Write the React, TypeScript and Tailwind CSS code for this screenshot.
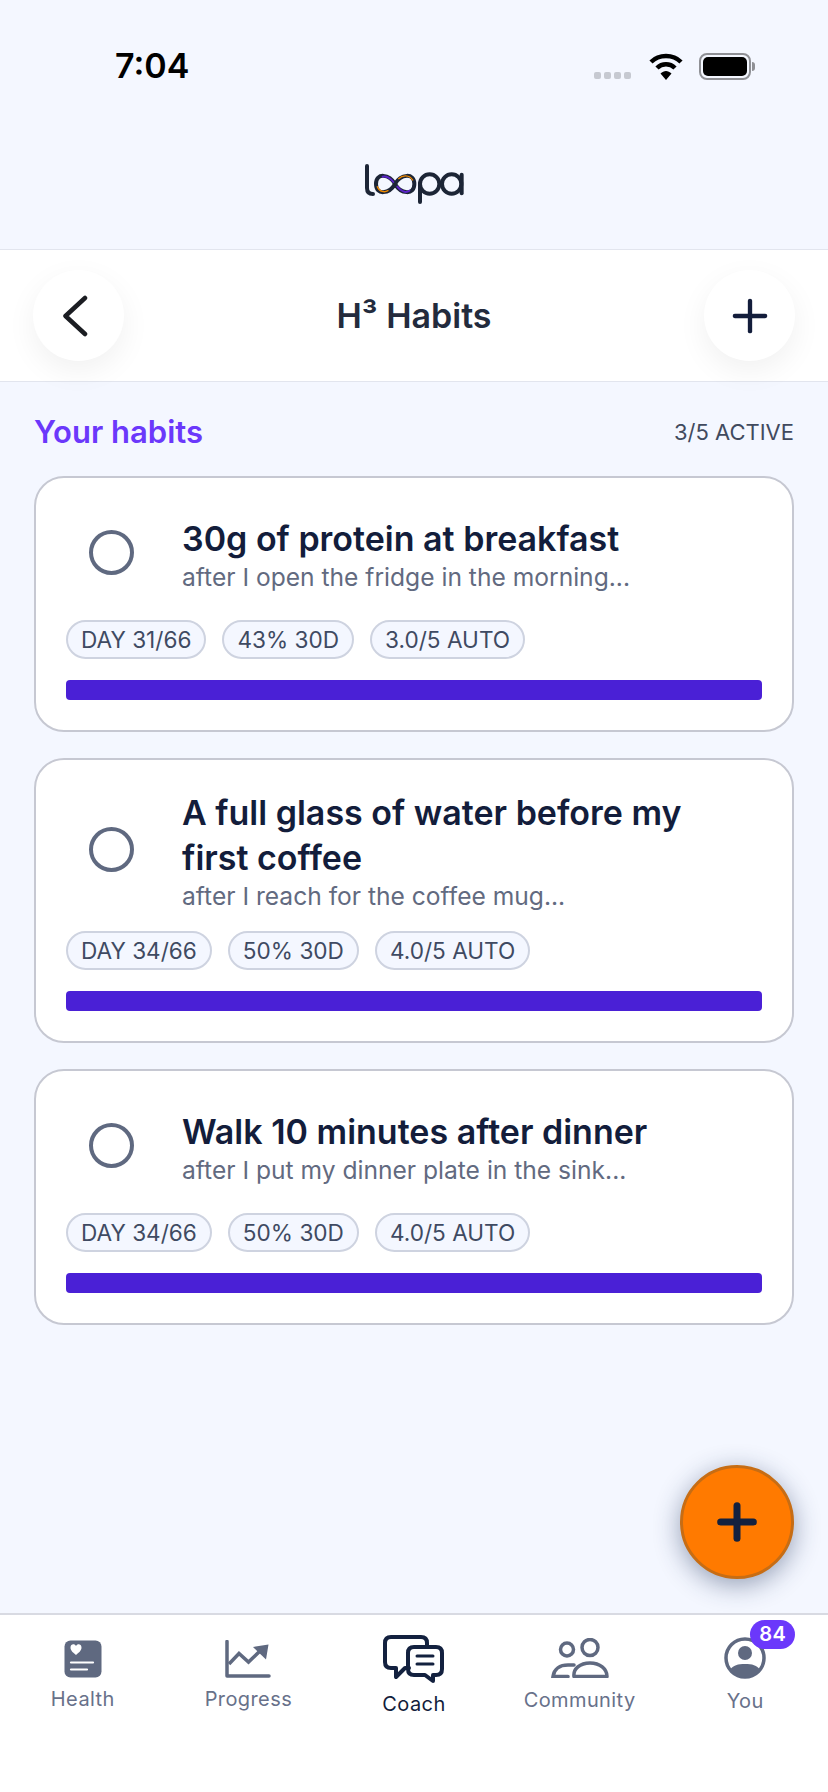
import { Plus } from "lucide-react";

const habits = [
  {
    title: "30g of protein at breakfast",
    cue: "after I open the fridge in the morning...",
    pills: ["DAY 31/66", "43% 30D", "3.0/5 AUTO"],
  },
  {
    title: "A full glass of water before my first coffee",
    cue: "after I reach for the coffee mug...",
    pills: ["DAY 34/66", "50% 30D", "4.0/5 AUTO"],
  },
  {
    title: "Walk 10 minutes after dinner",
    cue: "after I put my dinner plate in the sink...",
    pills: ["DAY 34/66", "50% 30D", "4.0/5 AUTO"],
  },
];

function LoopaLogo() {
  return (
    <svg width="100" height="46" viewBox="0 0 300 138" fill="none" strokeLinecap="round">
      <path d="M9 6V72C9 84 15 90 27 90" stroke="#1c2536" strokeWidth="12" />
      <path d="M93 60C76 30 36 25 36 60C36 95 76 90 93 60C110 30 151 25 151 60C151 95 110 90 93 60Z" stroke="#1c2536" strokeWidth="12" />
      <path d="M56 38C68 36 80 44 88 54" stroke="#5a22c8" strokeWidth="6" />
      <path d="M40 68C46 84 62 86 72 80" stroke="#f08a00" strokeWidth="4" />
      <path d="M104 44C116 32 136 32 146 48" stroke="#f08a00" strokeWidth="4" />
      <path d="M100 68C110 82 126 88 136 80" stroke="#5a22c8" strokeWidth="6" />
      <circle cx="197" cy="60" r="29" stroke="#1c2536" strokeWidth="12" />
      <path d="M168 60V114" stroke="#1c2536" strokeWidth="12" />
      <circle cx="263" cy="60" r="29" stroke="#1c2536" strokeWidth="12" />
      <path d="M293 32V88" stroke="#1c2536" strokeWidth="12" />
    </svg>
  );
}

function StatusBar() {
  return (
    <div className="relative h-[110px]">
      <span className="absolute left-[115px] top-[46px] text-[34px] leading-[40px] font-semibold text-black">7:04</span>
      <div className="absolute left-[594px] top-[72px] flex gap-[3px]">
        <span className="h-[7px] w-[7px] rounded-[2px] bg-[#c6c9d1]" />
        <span className="h-[7px] w-[7px] rounded-[2px] bg-[#c6c9d1]" />
        <span className="h-[7px] w-[7px] rounded-[2px] bg-[#c6c9d1]" />
        <span className="h-[7px] w-[7px] rounded-[2px] bg-[#c6c9d1]" />
      </div>
      <svg className="absolute left-[649px] top-[53px]" width="34" height="27" viewBox="0 0 34 27" fill="none">
        <path d="M2 9C10 1 24 1 32 9" stroke="#000" strokeWidth="4.5" />
        <path d="M8 15C13 10 21 10 26 15" stroke="#000" strokeWidth="4.5" />
        <path d="M11.5 20.5C15 17 19 17 22.5 20.5L17 27Z" fill="#000" />
      </svg>
      <div className="absolute left-[699px] top-[53px] flex h-[27px] w-[52px] items-center rounded-[8px] border-2 border-[#8f9095] p-[2px]">
        <span className="h-full w-full rounded-[5px] bg-black" />
      </div>
      <span className="absolute left-[752px] top-[62px] h-[9px] w-[3px] rounded-r-full bg-[#8f9095]" />
    </div>
  );
}

function HabitCard({ title, cue, pills }: { title: string; cue: string; pills: string[] }) {
  return (
    <div className="rounded-[30px] border-2 border-[#c6c8d2] bg-white px-[30px] pt-[30px] pb-[30px]">
      <div className="flex min-h-[93px] items-center">
        <span className="mb-[4px] ml-[23px] h-[45px] w-[45px] shrink-0 rounded-full border-[4px] border-[#5f6980]" />
        <div className="ml-[48px] min-w-0 flex-1 pr-[40px]">
          <p className="text-[34px] leading-[45px] font-semibold text-[#131d3b]">{title}</p>
          <p className="text-[24.6px] leading-[32px] text-[#626a80]">{cue}</p>
        </div>
      </div>
      <div className="mt-[19px] flex gap-[16px]">
        {pills.map((pill) => (
          <span
            key={pill}
            className="rounded-full border-2 border-[#ced3e0] bg-[#f4f7ff] px-[13px] text-[22.6px] leading-[35px] text-[#3f4a62]"
          >
            {pill}
          </span>
        ))}
      </div>
      <div className="mt-[21px] h-[20px] rounded-[4px] bg-[#4a20d6]" />
    </div>
  );
}

function HealthIcon() {
  return (
    <svg width="38" height="38" viewBox="0 0 38 38" fill="none">
      <rect x="0.5" y="0.5" width="37" height="37" rx="6" fill="#5f6980" />
      <path d="M12 16C8 13 6.5 11 6.5 8.6C6.5 5 10.500 4.300 12 7C13.500 4.300 17.500 5 17.500 8.600C17.500 11 16 13 12 16Z" fill="#fff" transform="translate(0 -1)" />
      <path d="M7 22.500H29" stroke="#fff" strokeWidth="2.200" strokeLinecap="round" />
      <path d="M7 29.500H23" stroke="#fff" strokeWidth="2.200" strokeLinecap="round" />
    </svg>
  );
}

function ProgressIcon() {
  return (
    <svg width="46" height="38" viewBox="0 0 46 38" fill="none">
      <path d="M2 1.500V36H44" stroke="#5f6980" strokeWidth="3.500" strokeLinecap="round" strokeLinejoin="round" />
      <path d="M4 24L14 13.500L23.500 22L34 12" stroke="#5f6980" strokeWidth="3.500" />
      <path d="M28 7L43.500 4.500L41 19.500Z" fill="#5f6980" />
    </svg>
  );
}

function CoachIcon() {
  return (
    <svg width="62" height="48" viewBox="0 0 62 48" fill="none" stroke="#13213f" strokeWidth="4" strokeLinejoin="round" strokeLinecap="round">
      <path d="M26 33H22L13 42V33H8C4 33 2 31 2 27V8C2 4 4 2 8 2H38C42 2 44 4 44 8V11" />
      <path d="M31 12H53C57 12 59 14 59 18V34C59 38 57 40 53 40H50V46L42 40H31C27 40 25 38 25 34V18C25 14 27 12 31 12Z" />
      <path d="M34 21H50M34 29H50" strokeWidth="3" />
    </svg>
  );
}

function CommunityIcon() {
  return (
    <svg width="58" height="40" viewBox="0 0 58 40" fill="none" stroke="#5f6980" strokeWidth="3.500">
      <circle cx="16" cy="11.500" r="6.500" />
      <circle cx="39" cy="9.500" r="8" />
      <path d="M23 27H17C9 27 3 31 2 38.500H17" strokeLinecap="round" />
      <path d="M23 38.500C22 31 29 25 39 25C49 25 56 31 56 38.500Z" strokeLinejoin="round" />
    </svg>
  );
}

function YouIcon() {
  return (
    <svg width="42" height="42" viewBox="0 0 42 42" fill="none">
      <circle cx="21" cy="21" r="19" fill="#fff" stroke="#5f6980" strokeWidth="3.500" />
      <circle cx="21" cy="16" r="7" fill="#5f6980" />
      <path d="M6 33C9 28 14 27 21 27C28 27 33 28 36 33C32 38 27 40.500 21 40.500C15 40.500 10 38 6 33Z" fill="#5f6980" />
    </svg>
  );
}

export default function App() {
  return (
    <div className="relative flex min-h-[1792px] flex-col bg-[#f4f7ff] font-['Inter',sans-serif]">
      <StatusBar />
      <div className="flex h-[139px] items-start justify-center pt-[54px]">
        <LoopaLogo />
      </div>

      <div className="flex h-[133px] items-center justify-between border-y border-[#e2e5ee] bg-white px-[33px]">
        <button className="flex h-[91px] w-[91px] items-center justify-center rounded-full bg-white shadow-[0_10px_30px_rgba(0,0,0,0.06)]" type="button">
          <svg className="mr-[7px]" width="26" height="42" viewBox="0 0 26 42" fill="none" stroke="#1b1d22" strokeWidth="4.500" strokeLinecap="round" strokeLinejoin="round">
            <path d="M23 3L3.500 21L23 39" />
          </svg>
        </button>
        <h1 className="text-[34px] font-semibold text-[#232b3d]">H³ Habits</h1>
        <button className="flex h-[91px] w-[91px] items-center justify-center rounded-full bg-white text-[#131d3b] shadow-[0_10px_30px_rgba(0,0,0,0.06)]" type="button">
          <Plus className="h-[52px] w-[52px]" strokeWidth={2} />
        </button>
      </div>

      <main className="flex-1 px-[34px] pt-[32px]">
        <div className="flex items-center justify-between">
          <h2 className="text-[31px] leading-[36px] font-semibold text-[#6b38fb]">Your habits</h2>
          <span className="text-[22px] text-[#414a5e]">3/5 ACTIVE</span>
        </div>
        <div className="mt-[26px] flex flex-col gap-[26px]">
          {habits.map((habit) => (
            <HabitCard key={habit.title} {...habit} />
          ))}
        </div>
      </main>

      <button
        className="absolute left-[680px] top-[1465px] flex h-[114px] w-[114px] items-center justify-center rounded-full border-[3px] border-[#c76d14] bg-[#ff7a00] text-[#13213f] shadow-[0_6px_26px_rgba(30,50,90,0.45)]"
        type="button"
      >
        <Plus className="h-[56px] w-[56px]" strokeWidth={3} />
      </button>

      <nav className="grid h-[179px] grid-cols-5 border-t-2 border-[#d8dae2] bg-white">
        <div className="flex flex-col items-center pt-[25px]">
          <HealthIcon />
          <span className="mt-[9px] text-[20px] leading-[24px] tracking-[0.4px] text-[#68718a]">Health</span>
        </div>
        <div className="flex flex-col items-center pt-[25px]">
          <ProgressIcon />
          <span className="mt-[9px] text-[20px] leading-[24px] tracking-[0.4px] text-[#68718a]">Progress</span>
        </div>
        <div className="flex flex-col items-center pt-[20px]">
          <CoachIcon />
          <span className="mt-[9px] text-[20px] leading-[24px] tracking-[0.4px] text-[#131d3b]">Coach</span>
        </div>
        <div className="flex flex-col items-center pt-[23px]">
          <CommunityIcon />
          <span className="mt-[10px] text-[20px] leading-[24px] tracking-[0.4px] text-[#68718a]">Community</span>
        </div>
        <div className="flex flex-col items-center pt-[22px]">
          <div className="relative">
            <YouIcon />
            <span className="absolute left-[26px] top-[-17px] rounded-full bg-[#6b38fb] px-[9px] text-[20px] leading-[29px] font-semibold tracking-[0.5px] text-white">84</span>
          </div>
          <span className="mt-[10px] text-[20px] leading-[24px] tracking-[0.4px] text-[#68718a]">You</span>
        </div>
      </nav>
    </div>
  );
}
